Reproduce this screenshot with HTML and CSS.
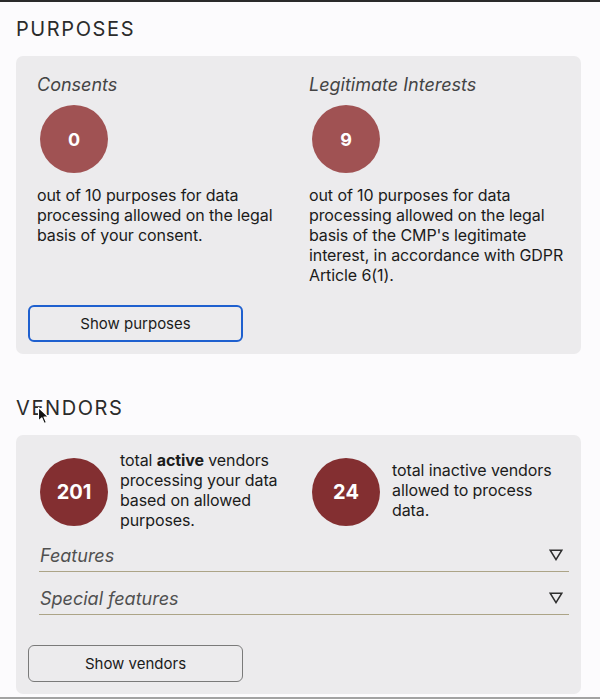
FILE: index.html
```html
<!DOCTYPE html>
<html lang="en">
<head>
<meta charset="utf-8">
<title>Purposes and vendors</title>
<link rel="stylesheet" href="styles.css">
</head>
<body>
<main class="page">
  <section class="section section-purposes">
    <h2 class="section-title">PURPOSES</h2>
    <div class="card">
      <div class="purpose-grid">
        <div class="purpose">
          <h3 class="purpose-title">Consents</h3>
          <div class="count count-light">0</div>
          <p class="purpose-text">out of 10 purposes for data processing allowed on the legal basis of your consent.</p>
        </div>
        <div class="purpose">
          <h3 class="purpose-title">Legitimate Interests</h3>
          <div class="count count-light">9</div>
          <p class="purpose-text">out of 10 purposes for data processing allowed on the legal basis of the CMP's legitimate interest, in accordance with GDPR Article 6(1).</p>
        </div>
      </div>
      <button class="btn btn-focused" type="button">Show purposes</button>
    </div>
  </section>

  <section class="section section-vendors">
    <h2 class="section-title">VENDORS</h2>
    <div class="card">
      <div class="stats-grid">
        <div class="stat">
          <div class="count count-dark">201</div>
          <p class="stat-text">total <strong>active</strong> vendors processing your data based on allowed purposes.</p>
        </div>
        <div class="stat">
          <div class="count count-dark">24</div>
          <p class="stat-text">total inactive vendors allowed to process data.</p>
        </div>
      </div>
      <div class="accordion">
        <div class="accordion-row">
          <span class="accordion-label">Features</span>
          <svg class="caret" width="14" height="12" viewBox="0 0 14 12" aria-hidden="true"><polygon points="1.2,1.2 12.8,1.2 7,10.6" fill="none" stroke="#2e2e2e" stroke-width="1.5" stroke-linejoin="miter"/></svg>
        </div>
        <div class="accordion-row">
          <span class="accordion-label">Special features</span>
          <svg class="caret" width="14" height="12" viewBox="0 0 14 12" aria-hidden="true"><polygon points="1.2,1.2 12.8,1.2 7,10.6" fill="none" stroke="#2e2e2e" stroke-width="1.5" stroke-linejoin="miter"/></svg>
        </div>
      </div>
      <button class="btn" type="button">Show vendors</button>
    </div>
  </section>
  <div class="bottom-rule"></div>

  <svg class="cursor" width="14" height="20" viewBox="0 0 14 20" aria-hidden="true"><path d="M1.5 1.5 L1.5 15 L4.8 11.8 L7.2 17.5 L9.4 16.5 L7 11 L11.6 11 Z" fill="#111" stroke="#fff" stroke-width="1.1" stroke-linejoin="round"/></svg>
</main>
</body>
</html>
```

FILE: styles.css
```css
html, body {
  margin: 0;
  padding: 0;
  overflow: hidden;
}

body {
  background: #fcfbfd;
  border-top: 2px solid #2a2a2a;
  font-family: Inter, "Liberation Sans", Arial, sans-serif;
  color: #1b1b1b;
}

.page {
  position: relative;
  padding: 0 19px 0 16px;
}

.section-title {
  margin: 0 0 15px 0;
  font-size: 20px;
  line-height: 24px;
  font-weight: 400;
  letter-spacing: 1.6px;
  color: #2b2b2b;
}

.section-purposes .section-title {
  margin-top: 15px;
}

.section-vendors .section-title {
  margin-top: 42px;
}

.card {
  background: #ecebed;
  border-radius: 7px;
  padding: 18px 12px 12px 12px;
}

.section-vendors .card {
  padding-top: 15px;
}

/* purposes */
.purpose-grid {
  display: grid;
  grid-template-columns: 1fr 1fr;
  column-gap: 12px;
  padding: 0 0 0 9px;
  align-items: start;
}

.purpose-title {
  margin: 0;
  font-size: 18px;
  line-height: 21px;
  font-weight: 400;
  font-style: italic;
  color: #444;
}

.count {
  width: 68px;
  height: 68px;
  border-radius: 50%;
  display: flex;
  align-items: center;
  justify-content: center;
  color: #fff;
  font-weight: 700;
  flex-shrink: 0;
}

.count-light {
  background: #a05253;
  font-size: 18px;
  margin: 10px 0 0 3px;
}

.count-dark {
  background: #832f31;
  font-size: 20px;
  margin-top: 4px;
}

.purpose-text {
  margin: 12px 0 0;
  font-size: 16px;
  line-height: 20px;
  letter-spacing: -0.1px;
}

.btn {
  display: block;
  width: 215px;
  height: 37px;
  border: 1px solid #7a7a7a;
  border-radius: 6px;
  background: transparent;
  font-family: Inter, "Liberation Sans", Arial, sans-serif;
  font-size: 15px;
  color: #1b1b1b;
  padding: 0;
}

.btn-focused {
  margin-top: 20px;
  border: 2px solid #1f60cf;
}

/* vendors */
.stats-grid {
  display: grid;
  grid-template-columns: 1fr 1fr;
  column-gap: 20px;
  padding: 0 5px 0 12px;
}

.stat {
  display: flex;
  align-items: center;
  gap: 12px;
}

.stat-text {
  margin: 0;
  font-size: 16px;
  line-height: 20px;
  letter-spacing: -0.1px;
}

.stat-text strong {
  font-weight: 700;
}

.accordion {
  margin: -1px 0 0 11px;
}

.accordion-row {
  display: flex;
  align-items: center;
  justify-content: space-between;
  padding: 16px 6px 5px 1px;
  border-bottom: 1px solid #aca487;
}

.accordion-label {
  font-size: 18px;
  line-height: 21px;
  font-style: italic;
  color: #505050;
}

.caret {
  display: block;
  margin-top: -2px;
}

.section-vendors .btn {
  margin-top: 30px;
}

.bottom-rule {
  margin: 3px -19px 0 -16px;
  border-top: 2px solid #a3a3a3;
}

.cursor {
  position: absolute;
  left: 37px;
  top: 389px;
}
```
